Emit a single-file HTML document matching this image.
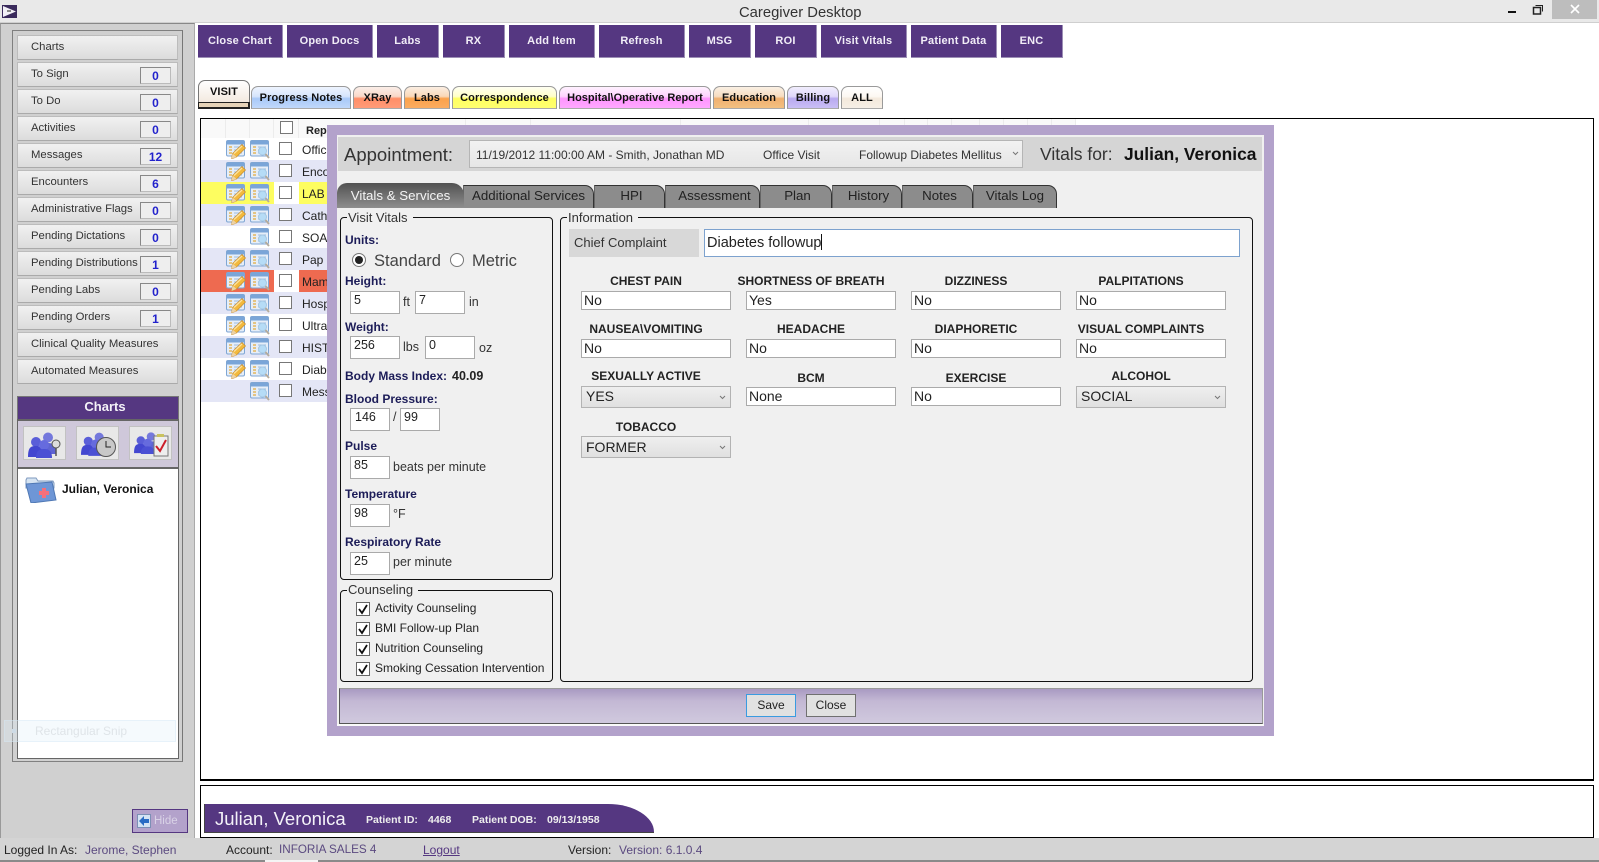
<!DOCTYPE html>
<html><head><meta charset="utf-8"><title>Caregiver Desktop</title>
<style>
*{box-sizing:border-box}
html,body{margin:0;padding:0;width:1599px;height:862px;overflow:hidden;background:#fff;font:12px/14px "Liberation Sans",sans-serif;color:#222}
.a{position:absolute;white-space:nowrap}
.box{position:absolute}
.tb{position:absolute;top:25px;height:33px;background:#553781;border-right:1px solid #9c8fb5;border-bottom:1px solid #9c8fb5;color:#f1edf7;font-weight:bold;font-size:11px;letter-spacing:.2px;line-height:32px;text-align:center}
.nav{position:absolute;left:17px;width:161px;height:25px;background:linear-gradient(#f1f1f1,#dcdcdc);border:1px solid #bcbcbc;border-bottom-color:#aaa;font-size:11.3px;line-height:23px;padding-left:13px;color:#333}
.bd{position:absolute;left:122px;top:4px;width:31px;height:17px;background:#eee;border:1px solid #888;border-right-color:#bbb;border-bottom-color:#bbb;color:#2222cc;font-weight:bold;font-size:12px;line-height:17px;text-align:center}
.dt{position:absolute;top:86px;height:23px;border:1px solid #9a9a9a;border-bottom:1px solid #aaa;border-radius:7px 7px 0 0;font-weight:bold;font-size:11px;letter-spacing:.1px;line-height:23px;text-align:center;color:#111}
.row{position:absolute;left:201px;width:1070px;height:22px}
.row span{position:absolute;left:101px;top:5px;font-size:12px}
.cb{position:absolute;left:78px;top:4px;width:13px;height:13px;background:#fff;border:1px solid #777}
.ic{position:absolute;top:2px;width:20px;height:19px}
.lv{background:#e4e6f6}
.hd{position:absolute;top:119px;width:1px;height:19px;background:#ececec}
.gt{position:absolute;top:124px;font-weight:bold;font-size:11px;line-height:14px}
.mt{position:absolute;top:185px;height:23px;background:#8c8c8c;border:1px solid #333;border-bottom:0;border-left-color:#666;border-radius:0 9px 0 0;color:#222;font-size:13.3px;line-height:20px;text-align:center}
.fs{position:absolute;border:1px solid #111;border-radius:4px}
.lg{position:absolute;top:-8px;left:6px;background:#f0f0f0;padding:0 5px 0 1px;font-size:13px;line-height:15px;color:#333}
.vl{position:absolute;left:345px;font-weight:bold;font-size:12px;line-height:14px;color:#1c1c58}
.in{position:absolute;background:#fff;border:1px solid #aaa;font-size:12.5px;line-height:15px;padding:1px 0 0 3px;color:#222}
.vt{position:absolute;font-size:12.5px;line-height:14px;color:#333}
.ck{position:absolute;left:356px;width:14px;height:14px;background:#fff;border:1px solid #666}
.cl{position:absolute;left:375px;font-size:12px;line-height:14px;color:#222}
.il{position:absolute;font-weight:bold;font-size:12px;line-height:14px;color:#222;text-align:center;width:200px}
.ii{position:absolute;width:150px;height:19px;background:#fff;border:1px solid #aaa;font-size:14px;line-height:17px;padding-left:2px;color:#222}
.is{position:absolute;width:150px;height:22px;background:linear-gradient(#efefef,#e0e0e0);border:1px solid #b3b3b3;font-size:14px;line-height:18px;padding-left:4px;color:#222}
.is svg,.ch{position:absolute}
.btn{position:absolute;top:694px;width:50px;height:23px;background:#e1e1e1;border:1px solid #707070;font-size:12px;line-height:21px;text-align:center;color:#222}
.pi{position:absolute;top:426px;width:43px;height:34px;background:#e8e8e8;border:1px solid #c2c2c2}
</style></head><body>
<svg width="0" height="0" style="position:absolute"><defs>
<symbol id="form" viewBox="0 0 20 19"><rect x=".5" y=".5" width="18" height="15.500" rx="1.500" fill="#e6eef8" stroke="#7fa6d4"/><rect x="1" y="1" width="17" height="3.500" fill="#7aa5d8"/><path d="M3 7h3M3 10h3M3 13h3" stroke="#e3b65c" stroke-width="1.400"/><path d="M8 7h8M8 10h8M8 13h8" stroke="#9dbce0"/></symbol>
<symbol id="edit" viewBox="0 0 20 19"><use href="#form" width="20" height="19"/><path d="M5.500 19l1-5.500L16 4.500l3.500 3.500-9 9z" fill="#f2b93e" stroke="#c58a2e" stroke-width=".7"/><path d="M8 13.500l8-7.500" stroke="#fde3a0" stroke-width="1.300"/><path d="M5.500 19l1-5.500 4 3.500z" fill="#ecd2a6"/></symbol>
<symbol id="view" viewBox="0 0 20 19"><use href="#form" width="20" height="19"/><circle cx="12.500" cy="11" r="4" fill="#b6dcf6" stroke="#a5c8e4"/><path d="M15.500 14l3.500 4" stroke="#b4aa9a" stroke-width="1.800"/></symbol>
<symbol id="ppl" viewBox="0 0 33 26"><circle cx="20" cy="5.500" r="5" fill="#7478dc"/><path d="M12 22c0-10 3-11 8-11s8 2 8 11z" fill="#5f64d2"/><circle cx="8" cy="10" r="5" fill="#5a5ed8"/><path d="M0 25c0-10 3-11 8-11s9 2 9 11z" fill="#4347d0"/><circle cx="16" cy="13" r="5" fill="#666bde"/><path d="M8 26c0-7 3-9 8-9s8 2 8 9z" fill="#4b50d4"/></symbol>
</defs></svg>

<!-- title bar -->
<div class="box" style="left:0;top:0;width:1599px;height:23px;background:#e9e9e9;border-bottom:1px solid #cfcfcf"></div>
<svg class="a" style="left:2px;top:5px" width="15" height="13"><rect width="15" height="13" fill="#3a2a5c"/><path d="M1 1l13 5.500L1 12z" fill="#f2f0f6"/><path d="M5 5h4v2H5z" fill="#888"/></svg>
<div class="a" style="left:739px;top:5px;font-size:14.800px;line-height:17px;color:#333">Caregiver Desktop</div>
<div class="box" style="left:1508px;top:11px;width:8px;height:2px;background:#111"></div>
<svg class="a" style="left:1532px;top:4px" width="12" height="11" fill="none" stroke="#222"><rect x="1.500" y="3.500" width="7" height="6.500" stroke-width="1.500"/><path d="M3.500 1.500h7v6"/></svg>
<div class="box" style="left:1552px;top:0;width:45px;height:19px;background:#bdbdbd"></div>
<svg class="a" style="left:1570px;top:4px" width="10" height="10" stroke="#fff" stroke-width="1.600"><path d="M1 1l8 8M9 1l-8 8"/></svg>

<!-- left panel -->
<div class="box" style="left:0;top:23px;width:195px;height:815px;background:#d0d0d0;border-left:1px solid #999;border-top:1px solid #888;border-right:1px solid #aaa"></div>
<div class="box" style="left:12px;top:30px;width:171px;height:732px;border:1px solid #808080;border-right:1px solid #777"></div>

<div class="nav" style="top:35px">Charts</div>
<div class="nav" style="top:62px">To Sign<div class="bd">0</div></div>
<div class="nav" style="top:89px">To Do<div class="bd">0</div></div>
<div class="nav" style="top:116px">Activities<div class="bd">0</div></div>
<div class="nav" style="top:143px">Messages<div class="bd">12</div></div>
<div class="nav" style="top:170px">Encounters<div class="bd">6</div></div>
<div class="nav" style="top:197px">Administrative Flags<div class="bd">0</div></div>
<div class="nav" style="top:224px">Pending Dictations<div class="bd">0</div></div>
<div class="nav" style="top:251px">Pending Distributions<div class="bd">1</div></div>
<div class="nav" style="top:278px">Pending Labs<div class="bd">0</div></div>
<div class="nav" style="top:305px">Pending Orders<div class="bd">1</div></div>
<div class="nav" style="top:332px">Clinical Quality Measures</div>
<div class="nav" style="top:359px">Automated Measures</div>

<div class="box" style="left:17px;top:396px;width:162px;height:23px;background:#553781;border-top:1px solid #777;border-left:1px solid #777;border-right:1px solid #777;color:#f4f2f8;font-weight:bold;font-size:13px;line-height:19px;text-align:center;padding-left:14px">Charts</div>
<div class="box" style="left:17px;top:419px;width:162px;height:50px;background:#cfc8da;border:1px solid #666;border-width:2px 1px 2px 1px"></div>
<div class="pi" style="left:23px"><svg class="a" style="left:4px;top:3px" width="37" height="28"><use href="#ppl" width="33" height="26" y="2"/><circle cx="28" cy="14" r="4" fill="#ddd" stroke="#555"/><path d="M28 18v8" stroke="#555" stroke-width="1.500"/></svg></div>
<div class="pi" style="left:76px"><svg class="a" style="left:4px;top:3px" width="37" height="28"><use href="#ppl" width="30" height="24" y="2"/><circle cx="25" cy="17" r="9.500" fill="#c8c8c8" stroke="#555"/><path d="M25 11v6h5" stroke="#222" fill="none"/></svg></div>
<div class="pi" style="left:129px"><svg class="a" style="left:4px;top:3px" width="37" height="28"><use href="#ppl" width="28" height="22" y="2"/><rect x="20" y="6" width="14" height="20" fill="#eee" stroke="#777"/><rect x="23" y="4" width="7" height="3" fill="#c9c25f"/><path d="M22 16l4 5 6-11" stroke="#cc1f2a" stroke-width="2" fill="none"/></svg></div>

<div class="box" style="left:17px;top:469px;width:162px;height:290px;background:#fff;border:1px solid #666;border-top:0"></div>
<svg class="a" style="left:25px;top:477px" width="32" height="26"><path d="M1 3l1-2h9l2 3h15l1 2v5H1z" fill="#d6e4f2" stroke="#7f9abf"/><path d="M1 7l26-2 4 18-25 3z" fill="#6e96d6" stroke="#4f78b4"/><path d="M17 12h4v3h3v4h-3v3h-4v-3h-3v-4h3z" fill="#f2707c" transform="translate(0,-1)"/></svg>
<div class="a" style="left:62px;top:482px;font-weight:bold;font-size:12px;color:#111">Julian, Veronica</div>
<div class="box" style="left:4px;top:720px;width:172px;height:22px;background:rgba(225,240,250,.32);border:1px solid rgba(210,230,245,.4)"></div>
<div class="box" style="left:12px;top:729px;width:4px;height:4px;background:#cddbe6"></div>
<div class="a" style="left:35px;top:724px;font-size:12px;color:#dfe4e8">Rectangular Snip</div>

<div class="box" style="left:132px;top:809px;width:56px;height:24px;background:#b3a2cb;border:1px solid #553781"></div>
<div class="box" style="left:137px;top:814px;width:14px;height:14px;background:#d4e3f4;border:1px solid #7c8fb5"></div>
<svg class="a" style="left:138px;top:815px" width="12" height="12"><path d="M1 6l5-5v3h5v4H6v3z" fill="#2a6cc4"/></svg>
<div class="a" style="left:154px;top:814px;font-size:11.500px;color:#d9d2e6">Hide</div>

<!-- toolbar -->
<div class="tb" style="left:198px;width:85px">Close Chart</div>
<div class="tb" style="left:287px;width:86px">Open Docs</div>
<div class="tb" style="left:377px;width:62px">Labs</div>
<div class="tb" style="left:443px;width:62px">RX</div>
<div class="tb" style="left:509px;width:86px">Add Item</div>
<div class="tb" style="left:599px;width:86px">Refresh</div>
<div class="tb" style="left:689px;width:62px">MSG</div>
<div class="tb" style="left:755px;width:62px">ROI</div>
<div class="tb" style="left:821px;width:86px">Visit Vitals</div>
<div class="tb" style="left:911px;width:86px">Patient Data</div>
<div class="tb" style="left:1001px;width:62px">ENC</div>

<!-- doc tabs -->
<div class="dt" style="left:198px;top:80px;width:52px;height:29px;background:linear-gradient(#fff,#efe3d5);border-color:#777;line-height:23px;border-bottom:0">VISIT<div class="box" style="left:-1px;top:21px;width:52px;height:7px;background:#e6d3b8;border:1px solid #222;border-width:1px 2px 2px 1px"></div></div>
<div class="dt" style="left:251px;width:100px;background:linear-gradient(#eef4fe,#d6e5fc 45%,#a9c9f8 55%,#c0d8fb)">Progress Notes</div>
<div class="dt" style="left:353px;width:49px;background:linear-gradient(#fbeee8,#f9d8c8 45%,#ff8e68 55%,#ff9b78)">XRay</div>
<div class="dt" style="left:404px;width:46px;background:linear-gradient(#fbeee2,#fad8b8 45%,#fba24c 55%,#fbac60)">Labs</div>
<div class="dt" style="left:452px;width:105px;background:linear-gradient(#fffff2,#ffffc8 45%,#ffff60 55%,#ffff70)">Correspondence</div>
<div class="dt" style="left:559px;width:152px;letter-spacing:0;background:linear-gradient(#fff2ff,#ffd2ff 45%,#ff95ff 55%,#ffa8ff)">Hospital\Operative Report</div>
<div class="dt" style="left:713px;width:72px;background:linear-gradient(#faf0e4,#f6dcc0 45%,#f0b070 55%,#f3c080)">Education</div>
<div class="dt" style="left:787px;width:52px;background:linear-gradient(#f1edfd,#e0d8fa 45%,#b9aaf0 55%,#c9bef5)">Billing</div>
<div class="dt" style="left:841px;width:42px;background:linear-gradient(#fff,#fdf8f2 45%,#f4e9dc 55%,#f6efe6)">ALL</div>

<!-- grid -->
<div class="box" style="left:200px;top:118px;width:1394px;height:663px;border:1px solid #000;border-width:1px 1px 2px 1px"></div>
<div class="box" style="left:201px;top:119px;width:875px;height:19px;background:#f9f9f9"></div>
<div class="hd" style="left:225px"></div><div class="hd" style="left:249px"></div><div class="hd" style="left:273px"></div><div class="hd" style="left:298px"></div><div class="hd" style="left:465px"></div><div class="hd" style="left:530px"></div><div class="hd" style="left:680px"></div><div class="hd" style="left:808px"></div><div class="hd" style="left:879px"></div><div class="hd" style="left:904px"></div><div class="hd" style="left:927px"></div><div class="hd" style="left:951px"></div><div class="hd" style="left:979px"></div><div class="hd" style="left:1003px"></div><div class="hd" style="left:1027px"></div><div class="hd" style="left:1051px"></div><div class="hd" style="left:1075px"></div>
<div class="box" style="left:280px;top:121px;width:13px;height:13px;background:#fff;border:1px solid #777"></div>
<div class="gt" style="left:306px">Report Type</div>
<div class="gt" style="left:473px">Signed by</div>
<div class="gt" style="left:537px">Date of Service</div>
<div class="gt" style="left:695px">Complaint</div>
<div class="gt" style="left:817px">Needing</div>

<div class="row" style="top:138px"><svg class="ic" style="left:25px"><use href="#edit"/></svg><svg class="ic" style="left:49px"><use href="#view"/></svg><div class="cb"></div><span>Office Visit</span></div>
<div class="row lv" style="top:160px"><svg class="ic" style="left:25px"><use href="#edit"/></svg><svg class="ic" style="left:49px"><use href="#view"/></svg><div class="cb"></div><span>Encounter</span></div>
<div class="row" style="top:182px"><div class="box" style="left:0;top:0;width:73px;height:22px;background:#fdfd60"></div><div class="box" style="left:98px;top:0;width:30px;height:22px;background:#fdfd60"></div><svg class="ic" style="left:25px"><use href="#edit"/></svg><svg class="ic" style="left:49px"><use href="#view"/></svg><div class="cb"></div><span>LAB</span></div>
<div class="row lv" style="top:204px"><svg class="ic" style="left:25px"><use href="#edit"/></svg><svg class="ic" style="left:49px"><use href="#view"/></svg><div class="cb"></div><span>Catheter</span></div>
<div class="row" style="top:226px"><svg class="ic" style="left:49px"><use href="#view"/></svg><div class="cb"></div><span>SOAP</span></div>
<div class="row lv" style="top:248px"><svg class="ic" style="left:25px"><use href="#edit"/></svg><svg class="ic" style="left:49px"><use href="#view"/></svg><div class="cb"></div><span>Pap</span></div>
<div class="row" style="top:270px"><div class="box" style="left:0;top:0;width:73px;height:22px;background:#ee6a50"></div><div class="box" style="left:98px;top:0;width:30px;height:22px;background:#ee6a50"></div><svg class="ic" style="left:25px"><use href="#edit"/></svg><svg class="ic" style="left:49px"><use href="#view"/></svg><div class="cb"></div><span>Mammogram</span></div>
<div class="row lv" style="top:292px"><svg class="ic" style="left:25px"><use href="#edit"/></svg><svg class="ic" style="left:49px"><use href="#view"/></svg><div class="cb"></div><span>Hospital</span></div>
<div class="row" style="top:314px"><svg class="ic" style="left:25px"><use href="#edit"/></svg><svg class="ic" style="left:49px"><use href="#view"/></svg><div class="cb"></div><span>Ultrasound</span></div>
<div class="row lv" style="top:336px"><svg class="ic" style="left:25px"><use href="#edit"/></svg><svg class="ic" style="left:49px"><use href="#view"/></svg><div class="cb"></div><span>HISTORY</span></div>
<div class="row" style="top:358px"><svg class="ic" style="left:25px"><use href="#edit"/></svg><svg class="ic" style="left:49px"><use href="#view"/></svg><div class="cb"></div><span>Diabetes</span></div>
<div class="row lv" style="top:380px"><svg class="ic" style="left:49px"><use href="#view"/></svg><div class="cb"></div><span>Message</span></div>

<!-- modal -->
<div class="box" style="left:327px;top:125px;width:947px;height:611px;background:#b3a2cb"></div>
<div class="box" style="left:337px;top:135px;width:927px;height:591px;background:#f0f0f0;border-bottom:2px solid #fafafa"></div>
<div class="box" style="left:338px;top:137px;width:924px;height:34px;background:#d5d5d5"></div>
<div class="a" style="left:344px;top:144px;font-size:18.500px;line-height:21px;color:#333">Appointment:</div>
<div class="box" style="left:469px;top:140px;width:554px;height:28px;background:linear-gradient(#f2f2f2,#e6e6e6);border:1px solid #b5b5b5"></div>
<div class="a" style="left:476px;top:148px;color:#333">11/19/2012 11:00:00 AM - Smith, Jonathan MD</div>
<div class="a" style="left:763px;top:148px;color:#333">Office Visit</div>
<div class="a" style="left:859px;top:148px;color:#333;font-size:12px">Followup Diabetes Mellitus</div>
<svg class="a" style="left:1012px;top:151px" width="7" height="5" fill="none" stroke="#777"><path d="M1 1l2.500 2.500L6 1"/></svg>
<div class="a" style="left:1040px;top:144px;font-size:17.500px;line-height:21px;color:#333">Vitals for:</div>
<div class="a" style="left:1124px;top:144px;font-size:17.400px;line-height:21px;font-weight:bold;color:#111">Julian, Veronica</div>

<div class="mt" style="left:463px;width:131px">Additional Services</div>
<div class="mt" style="left:594px;width:71px;padding-left:4px">HPI</div>
<div class="mt" style="left:665px;width:95px;padding-left:4px">Assessment</div>
<div class="mt" style="left:760px;width:72px;padding-left:3px">Plan</div>
<div class="mt" style="left:832px;width:70px;padding-left:3px">History</div>
<div class="mt" style="left:902px;width:71px;padding-left:4px">Notes</div>
<div class="mt" style="left:973px;width:84px">Vitals Log</div>
<div class="box" style="left:337px;top:183px;width:127px;height:25px;background:linear-gradient(#525252,#8e8e8e);border-radius:10px 12px 0 0;color:#f4f4f4;font-size:13.300px;line-height:26px;text-align:center">Vitals &amp; Services</div>

<!-- Visit vitals -->
<div class="fs" style="left:340px;top:217px;width:213px;height:363px"><div class="lg">Visit Vitals</div></div>
<div class="vl" style="top:233px">Units:</div>
<svg class="a" style="left:351px;top:252px" width="16" height="16"><circle cx="8" cy="8" r="6.500" fill="#fff" stroke="#777"/><circle cx="8" cy="8" r="4" fill="#222"/></svg>
<div class="a" style="left:374px;top:251px;font-size:16.500px;line-height:20px;color:#444">Standard</div>
<svg class="a" style="left:449px;top:252px" width="16" height="16"><circle cx="8" cy="8" r="6.500" fill="#fff" stroke="#777"/></svg>
<div class="a" style="left:472px;top:251px;font-size:16.500px;line-height:20px;color:#444">Metric</div>
<div class="vl" style="top:274px">Height:</div>
<div class="in" style="left:350px;top:291px;width:50px;height:23px">5</div>
<div class="vt" style="left:403px;top:295px">ft</div>
<div class="in" style="left:415px;top:291px;width:50px;height:23px">7</div>
<div class="vt" style="left:469px;top:295px">in</div>
<div class="vl" style="top:320px">Weight:</div>
<div class="in" style="left:350px;top:336px;width:50px;height:23px">256</div>
<div class="vt" style="left:403px;top:340px">lbs</div>
<div class="in" style="left:425px;top:336px;width:50px;height:23px">0</div>
<div class="vt" style="left:479px;top:341px">oz</div>
<div class="vl" style="top:369px">Body Mass Index:</div>
<div class="a" style="left:452px;top:369px;font-weight:bold;font-size:12.500px;color:#222">40.09</div>
<div class="vl" style="top:392px">Blood Pressure:</div>
<div class="in" style="left:350px;top:408px;width:40px;height:23px;padding-left:4px">146</div>
<div class="vt" style="left:393px;top:410px">/</div>
<div class="in" style="left:400px;top:408px;width:40px;height:23px">99</div>
<div class="vl" style="top:439px">Pulse</div>
<div class="in" style="left:350px;top:456px;width:40px;height:23px">85</div>
<div class="vt" style="left:393px;top:460px">beats per minute</div>
<div class="vl" style="top:487px">Temperature</div>
<div class="in" style="left:350px;top:504px;width:40px;height:23px">98</div>
<div class="vt" style="left:393px;top:507px">°F</div>
<div class="vl" style="top:535px">Respiratory Rate</div>
<div class="in" style="left:350px;top:552px;width:40px;height:23px">25</div>
<div class="vt" style="left:393px;top:555px">per minute</div>

<!-- Counseling -->
<div class="fs" style="left:340px;top:590px;width:213px;height:92px"><div class="lg" style="top:-9px">Counseling</div></div>
<div class="ck" style="top:602px"><svg width="12" height="12" style="position:absolute" fill="none" stroke="#111" stroke-width="1.800"><path d="M2 6l3 4 5-8"/></svg></div><div class="cl" style="top:601px">Activity Counseling</div>
<div class="ck" style="top:622px"><svg width="12" height="12" style="position:absolute" fill="none" stroke="#111" stroke-width="1.800"><path d="M2 6l3 4 5-8"/></svg></div><div class="cl" style="top:621px">BMI Follow-up Plan</div>
<div class="ck" style="top:642px"><svg width="12" height="12" style="position:absolute" fill="none" stroke="#111" stroke-width="1.800"><path d="M2 6l3 4 5-8"/></svg></div><div class="cl" style="top:641px">Nutrition Counseling</div>
<div class="ck" style="top:662px"><svg width="12" height="12" style="position:absolute" fill="none" stroke="#111" stroke-width="1.800"><path d="M2 6l3 4 5-8"/></svg></div><div class="cl" style="top:661px">Smoking Cessation Intervention</div>

<!-- Information -->
<div class="fs" style="left:560px;top:217px;width:693px;height:465px"><div class="lg">Information</div></div>
<div class="box" style="left:569px;top:229px;width:130px;height:28px;background:#d8d8d8;font-size:13px;line-height:27px;padding-left:5px;color:#333">Chief Complaint</div>
<div class="box" style="left:704px;top:229px;width:536px;height:28px;background:#fff;border:1px solid #7da2ce;font-size:14.500px;line-height:26px;padding-left:2px;color:#222">Diabetes followup<span style="display:inline-block;width:1px;height:16px;background:#111;vertical-align:-3px"></span></div>

<div class="il" style="left:546px;top:274px">CHEST PAIN</div>
<div class="il" style="left:711px;top:274px">SHORTNESS OF BREATH</div>
<div class="il" style="left:876px;top:274px">DIZZINESS</div>
<div class="il" style="left:1041px;top:274px">PALPITATIONS</div>
<div class="ii" style="left:581px;top:291px">No</div>
<div class="ii" style="left:746px;top:291px">Yes</div>
<div class="ii" style="left:911px;top:291px">No</div>
<div class="ii" style="left:1076px;top:291px">No</div>

<div class="il" style="left:546px;top:322px">NAUSEA\VOMITING</div>
<div class="il" style="left:711px;top:322px">HEADACHE</div>
<div class="il" style="left:876px;top:322px">DIAPHORETIC</div>
<div class="il" style="left:1041px;top:322px">VISUAL COMPLAINTS</div>
<div class="ii" style="left:581px;top:339px">No</div>
<div class="ii" style="left:746px;top:339px">No</div>
<div class="ii" style="left:911px;top:339px">No</div>
<div class="ii" style="left:1076px;top:339px">No</div>

<div class="il" style="left:546px;top:369px">SEXUALLY ACTIVE</div>
<div class="il" style="left:711px;top:371px">BCM</div>
<div class="il" style="left:876px;top:371px">EXERCISE</div>
<div class="il" style="left:1041px;top:369px">ALCOHOL</div>
<div class="is" style="left:581px;top:386px">YES<svg style="left:137px;top:8px" width="7" height="5" fill="none" stroke="#777"><path d="M1 1l2.500 2.500L6 1"/></svg></div>
<div class="ii" style="left:746px;top:387px">None</div>
<div class="ii" style="left:911px;top:387px">No</div>
<div class="is" style="left:1076px;top:386px">SOCIAL<svg style="left:137px;top:8px" width="7" height="5" fill="none" stroke="#777"><path d="M1 1l2.500 2.500L6 1"/></svg></div>

<div class="il" style="left:546px;top:420px">TOBACCO</div>
<div class="is" style="left:581px;top:436px;line-height:20px">FORMER<svg style="left:137px;top:8px" width="7" height="5" fill="none" stroke="#777"><path d="M1 1l2.500 2.500L6 1"/></svg></div>

<!-- modal footer -->
<div class="box" style="left:339px;top:688px;width:924px;height:36px;background:linear-gradient(#a99ac2,#c3b8d4 35%,#d0c9de);border:1px solid #555;border-top-color:#999;border-right-color:#999"></div>
<div class="btn" style="left:746px;border:1px solid #3a9be0">Save</div>
<div class="btn" style="left:806px">Close</div>

<!-- banner -->
<div class="box" style="left:200px;top:785px;width:1394px;height:53px;border:1px solid #000;border-width:1px 1px 1px 1px"></div>
<div class="box" style="left:204px;top:804px;width:450px;height:29px;background:#553781;border-left:1px solid #444;border-bottom:1px solid #444;border-radius:0 46px 0 0/0 28px 0 0"></div>
<div class="a" style="left:215px;top:808px;font-size:18.500px;line-height:22px;color:#f4f2f8">Julian, Veronica</div>
<div class="a" style="left:366px;top:813px;font-weight:bold;font-size:10.500px;color:#eee">Patient ID:</div>
<div class="a" style="left:428px;top:813px;font-weight:bold;font-size:10.500px;color:#eee">4468</div>
<div class="a" style="left:472px;top:813px;font-weight:bold;font-size:10.500px;color:#eee">Patient DOB:</div>
<div class="a" style="left:547px;top:813px;font-weight:bold;font-size:10.500px;color:#eee">09/13/1958</div>

<!-- status bar -->
<div class="box" style="left:0;top:838px;width:1599px;height:22px;background:#d4d4d4"></div>
<div class="box" style="left:0;top:860px;width:1599px;height:2px;background:#8a8a8a"></div>
<div class="box" style="left:265px;top:860px;width:53px;height:2px;background:#f4f4f4"></div>
<div class="a" style="left:4px;top:843px;color:#222">Logged In As:</div>
<div class="a" style="left:85px;top:843px;color:#5b4a80">Jerome, Stephen</div>
<div class="a" style="left:226px;top:843px;color:#222">Account:</div>
<div class="a" style="left:279px;top:843px;font-size:11.700px;color:#5b4a80">INFORIA SALES 4</div>
<div class="a" style="left:423px;top:843px;color:#553781;text-decoration:underline">Logout</div>
<div class="a" style="left:568px;top:843px;color:#222">Version:</div>
<div class="a" style="left:619px;top:843px;color:#5b4a80">Version: 6.1.0.4</div>
</body></html>
